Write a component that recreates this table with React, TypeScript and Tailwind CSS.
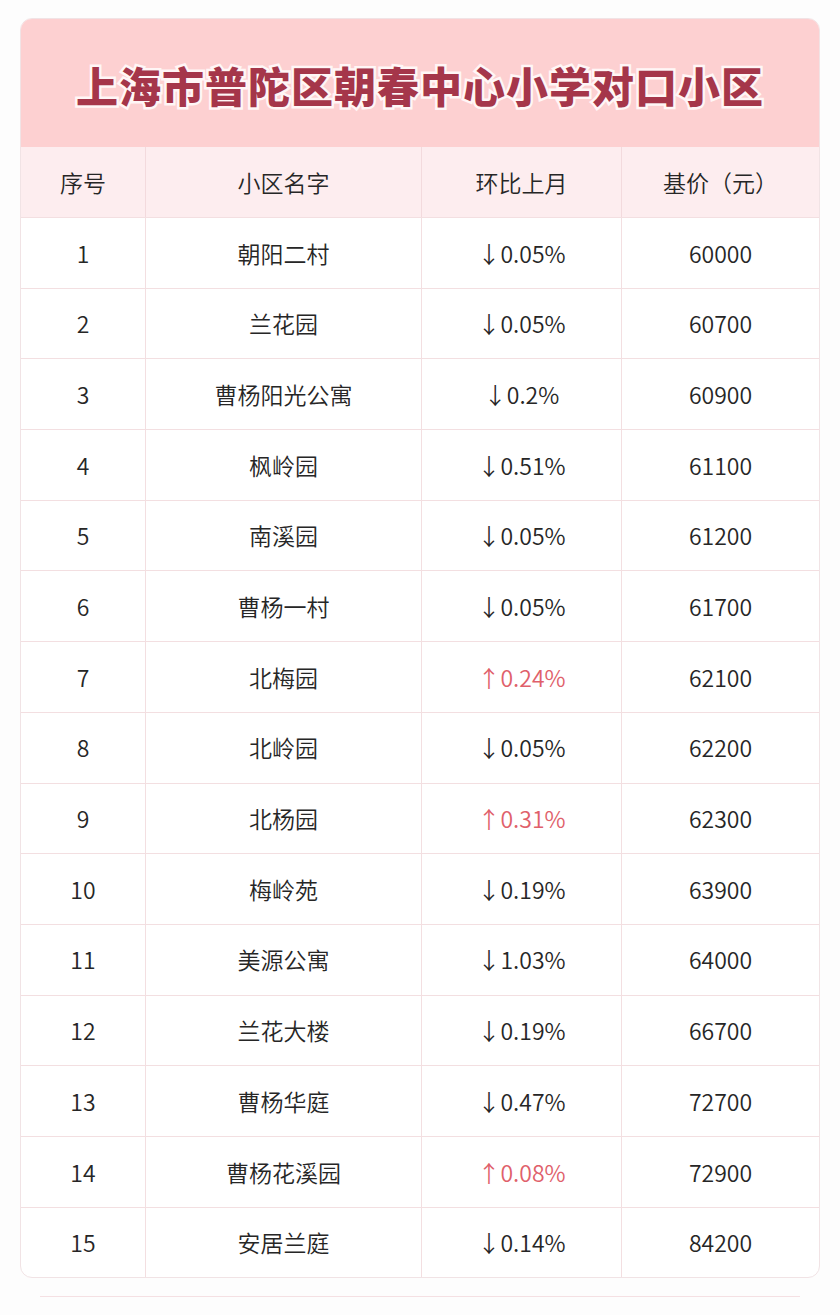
import React from 'react';

interface Row {
    name: string;
    change: string;
    up: boolean;
    price: number;
}

const ROWS: Row[] = [
    { name: '朝阳二村', change: '0.05%', up: false, price: 60000 },
    { name: '兰花园', change: '0.05%', up: false, price: 60700 },
    { name: '曹杨阳光公寓', change: '0.2%', up: false, price: 60900 },
    { name: '枫岭园', change: '0.51%', up: false, price: 61100 },
    { name: '南溪园', change: '0.05%', up: false, price: 61200 },
    { name: '曹杨一村', change: '0.05%', up: false, price: 61700 },
    { name: '北梅园', change: '0.24%', up: true, price: 62100 },
    { name: '北岭园', change: '0.05%', up: false, price: 62200 },
    { name: '北杨园', change: '0.31%', up: true, price: 62300 },
    { name: '梅岭苑', change: '0.19%', up: false, price: 63900 },
    { name: '美源公寓', change: '1.03%', up: false, price: 64000 },
    { name: '兰花大楼', change: '0.19%', up: false, price: 66700 },
    { name: '曹杨华庭', change: '0.47%', up: false, price: 72700 },
    { name: '曹杨花溪园', change: '0.08%', up: true, price: 72900 },
    { name: '安居兰庭', change: '0.14%', up: false, price: 84200 },
];

const HEADERS = ['序号', '小区名字', '环比上月', '基价（元）'];

const FONT = "font-['Noto_Sans_CJK_SC','Noto_Sans',sans-serif]";

export default function App() {
    return (
        <div className={`min-h-[1315px] w-[840px] bg-[#fdfdfd] pt-[18px] ${FONT}`}>
            <div className="mx-[20px] overflow-hidden rounded-[12px] border border-[#f1e3e5] bg-white">
                {/* Title band */}
                <div className="flex h-[128px] items-center justify-center bg-[#fdd0d1] pt-[4px]">
                    <h1 className="text-[42px] font-black leading-none tracking-[1px] text-[#a5364a] [-webkit-text-stroke:5px_#fff6f6] [paint-order:stroke_fill]">
                        上海市普陀区朝春中心小学对口小区
                    </h1>
                </div>

                {/* Table */}
                <div className="grid grid-cols-[124px_276px_200px_198px] text-[23px] font-[350] text-[#262626]">
                    {HEADERS.map((h, i) => (
                        <div
                            key={h}
                            className={`flex h-[70px] items-center justify-center bg-[#fdedef] ${i > 0 ? 'border-l border-[#f3dadd]' : ''}`}
                        >
                            {h}
                        </div>
                    ))}
                    {ROWS.map((r, idx) => (
                        <React.Fragment key={r.name}>
                            <div className="flex h-[70.7px] items-center justify-center border-t border-[#f3dfe1]">
                                {idx + 1}
                            </div>
                            <div className="flex h-[70.7px] items-center justify-center border-l border-t border-[#f3dfe1]">
                                {r.name}
                            </div>
                            <div
                                className={`flex h-[70.7px] items-center justify-center border-l border-t border-[#f3dfe1] ${r.up ? 'text-[#e0606a]' : ''}`}
                            >
                                {r.up ? '↑' : '↓'}{r.change}
                            </div>
                            <div className="flex h-[70.7px] items-center justify-center border-l border-t border-[#f3dfe1]">
                                {r.price}
                            </div>
                        </React.Fragment>
                    ))}
                </div>
            </div>

            <div className="mx-[40px] mt-[18px] h-px bg-[#f5e0e3]" />
        </div>
    );
}
